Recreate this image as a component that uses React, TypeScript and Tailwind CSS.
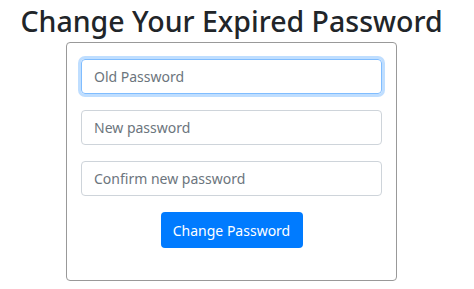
export default function App() {
  return (
    <div className="w-[463px] flex flex-col items-center pt-[1px] font-['Noto_Sans',sans-serif]">
      <h1 className="text-[28.5px] leading-[40px] font-medium text-[#212529] whitespace-nowrap">
        Change Your Expired Password
      </h1>
      <div className="mt-[1px] w-[331px] border border-[#999] rounded-[4px] px-[14px] pt-[16px] pb-[32px] flex flex-col items-center gap-[16px]">
        <input
          type="password"
          placeholder="Old Password"
          className="w-full h-[35px] rounded-[4px] border border-[#80bdff] px-3 text-[14px] text-[#495057] placeholder:text-[#6c757d] outline-none shadow-[0_0_0_3px_rgba(0,123,255,0.25)]"
        />
        <input
          type="password"
          placeholder="New password"
          className="w-full h-[35px] rounded-[4px] border border-[#ced4da] px-3 text-[14px] text-[#495057] placeholder:text-[#6c757d] outline-none"
        />
        <input
          type="password"
          placeholder="Confirm new password"
          className="w-full h-[35px] rounded-[4px] border border-[#ced4da] px-3 text-[14px] text-[#495057] placeholder:text-[#6c757d] outline-none"
        />
        <button className="w-[142px] h-[36px] rounded-[4px] bg-[#007bff] text-white text-[14px]">
          Change Password
        </button>
      </div>
    </div>
  );
}
